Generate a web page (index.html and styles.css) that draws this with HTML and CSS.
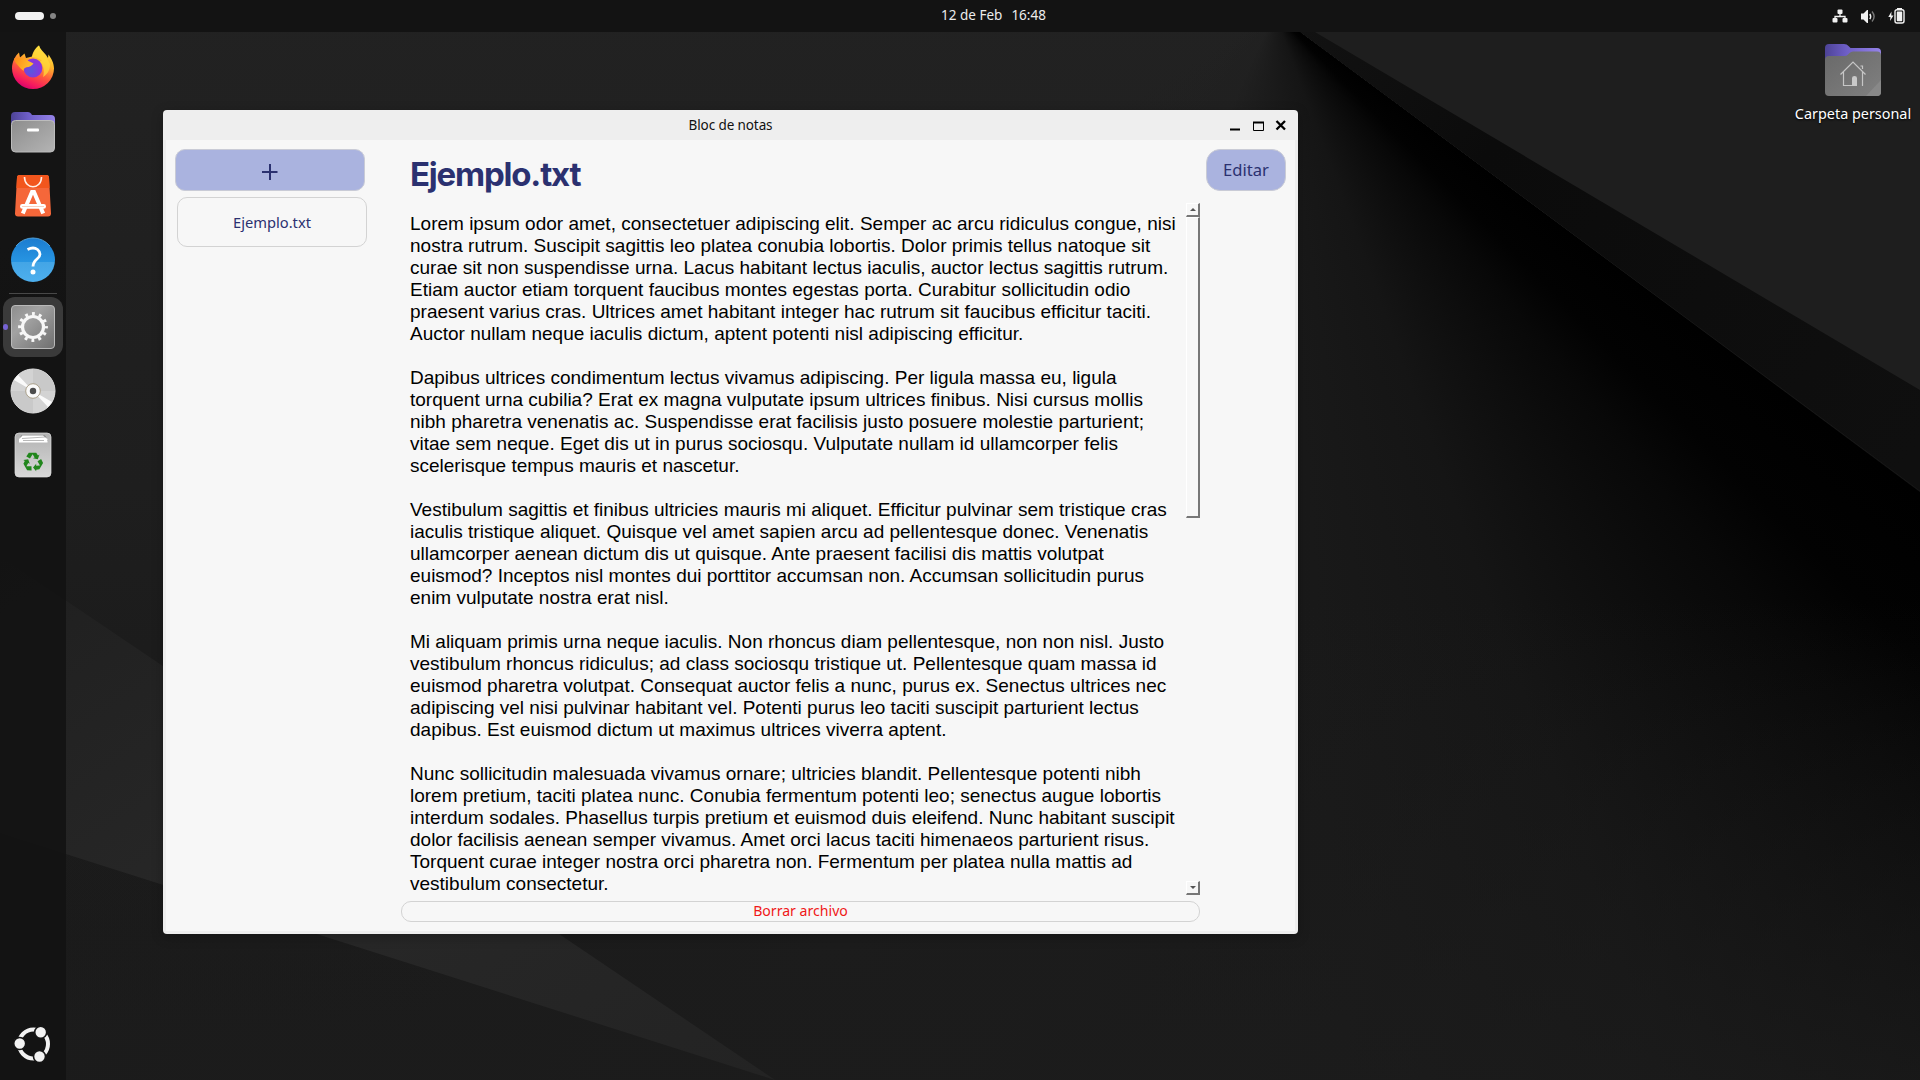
FILE: index.html
```html
<!DOCTYPE html>
<html lang="es">
<head>
<meta charset="utf-8">
<title>Bloc de notas</title>
<link rel="stylesheet" href="styles.css">
</head>
<body>
<svg class="wallpaper" viewBox="0 0 1920 1080" preserveAspectRatio="none">
  <defs>
    <linearGradient id="band" gradientUnits="userSpaceOnUse" x1="1300" y1="32" x2="1920" y2="440"><stop offset="0" stop-color="#121212"/><stop offset=".3" stop-color="#0b0b0b"/><stop offset="1" stop-color="#0f0f0f"/></linearGradient>
    <linearGradient id="wedge" x1="0" y1="0" x2="1" y2="1"><stop offset="0" stop-color="#1f1f1f"/><stop offset=".5" stop-color="#282828"/><stop offset="1" stop-color="#232323"/></linearGradient>
  </defs>
  <path d="M0 556 775 1080 0 833z" fill="url(#wedge)"/>
  <path d="M1300 32 1315 32 1920 390V491z" fill="url(#band)"/>
</svg>

<div class="desktop">
  <header class="topbar">
    <div class="workspaces"><i class="pill"></i><i class="dot"></i></div>
    <div class="clock"><span class="t">12 de Feb</span><span class="t">16:48</span></div>
    <div class="tray">
      <svg width="16" height="16" viewBox="0 0 16 16" fill="#f2f2f2"><rect x="5.5" y="1.5" width="5" height="4.5" rx="1"/><rect x=".5" y="10" width="5" height="4.5" rx="1"/><rect x="10.500" y="10" width="5" height="4.500" rx="1"/><path d="M8 5V8.500M3 11V8.500H13V11" fill="none" stroke="#f2f2f2" stroke-width="1.300"/></svg>
      <svg width="16" height="16" viewBox="0 0 16 16" fill="#f2f2f2"><path d="M1 5.500H3.500L7 2H8V15H7L3.500 11.500H1z"/><path d="M9.800 6Q11.500 8.500 9.800 11" fill="none" stroke="#f2f2f2" stroke-width="1.500"/><path d="M12 3.500Q16.200 8.500 12 13.500" fill="none" stroke="#777" stroke-width="1.400"/></svg>
      <svg width="17" height="16" viewBox="0 0 17 16" fill="#f2f2f2"><path d="M3.500 3.500 .3 9H2.500L2 13 5.500 7.500H3.300z"/><path d="M9 0h5v2H9z"/><rect x="7" y="1.700" width="9" height="13.300" rx="2" fill="none" stroke="#f2f2f2" stroke-width="1.400"/><rect x="8.800" y="3.500" width="5.400" height="9.700" rx=".6"/></svg>
    </div>
  </header>

  <div class="workspace">
    <nav class="dock">
      <div class="slot first">
        <svg width="46" height="46" viewBox="0 0 46 46">
          <defs>
            <linearGradient id="ff" x1=".75" y1="0" x2=".3" y2="1"><stop offset="0" stop-color="#fff04a"/><stop offset=".35" stop-color="#ffb52b"/><stop offset=".62" stop-color="#ff553f"/><stop offset=".85" stop-color="#f5195f"/><stop offset="1" stop-color="#d4006e"/></linearGradient>
            <radialGradient id="orb" cx=".4" cy=".65"><stop offset="0" stop-color="#5858dd"/><stop offset="1" stop-color="#8a35dc"/></radialGradient>
            <linearGradient id="fox" x1="0" y1="0" x2="1" y2=".3"><stop offset="0" stop-color="#ff8a16"/><stop offset="1" stop-color="#ffc02e"/></linearGradient>
          </defs>
          <path d="M22 12.500C23 7 26 3.500 29 1.500C30 5 33 7.500 36 11L38 14 38.500 10.500C41 14 44 19 44 24.500A21 20.500 0 0 1 2 24.500C2 18 5 12 9 8.500L10 13.500 14.500 9.500 16 14z" fill="url(#ff)"/>
          <circle cx="23" cy="24" r="9.400" fill="url(#orb)"/>
          <path d="M4 14.500C10 12.500 16 14 18.500 17L23.500 19.500C22 22 19 23 16.500 23.300C14 24.500 13.500 25 13.600 27C10 24 5 19 4 14.500z" fill="url(#fox)"/>
          <path d="M22 12.500C24 8 26 5 29 1.500C30 8 37 12 40 20C40 28 36 31 33 33C35 27 33 19 29.500 17.500L32 16.500C28 14 25 13 22 13z" fill="#ffd93b" opacity=".75"/>
        </svg>
      </div>
      <div class="slot">
        <svg width="46" height="46" viewBox="0 -1 46 46">
          <defs><linearGradient id="pur" x1="0" y1="0" x2="1" y2="0"><stop offset="0" stop-color="#4d4396"/><stop offset=".4" stop-color="#6f5fc8"/><stop offset="1" stop-color="#9583e8"/></linearGradient><linearGradient id="gry" x1="0" y1="0" x2="1" y2="1"><stop offset="0" stop-color="#8d8d8d"/><stop offset="1" stop-color="#b4b4b4"/></linearGradient></defs>
          <path d="M1 6a4 4 0 0 1 4-4H18q2 0 3 1.500l1 1.500H41a4 4 0 0 1 4 4V26H1z" fill="url(#pur)"/>
          <rect x="1.500" y="10.500" width="43" height="31.500" rx="4" fill="url(#gry)" stroke="#bcbcbc"/>
          <rect x="17" y="18.500" width="12" height="3" rx="1" fill="#fff"/>
        </svg>
      </div>
      <div class="slot">
        <svg width="46" height="46" viewBox="0 0 46 46">
          <path d="M9.500 2H36.500Q39 2 39 4.500L41 40.500Q41 43.500 38 43.500H8Q5 43.500 5 40.500L7 4.500Q7 2 9.500 2z" fill="#f5673a"/>
          <path d="M9.500 2H36.500Q39 2 39 4.500L39.500 15H6.400L7 4.500Q7 2 9.500 2z" fill="#f2561d"/>
          <path d="M14.500 4C14.500 17 31.500 17 31.500 4" fill="none" stroke="#fff0e8" stroke-width="1.600"/>
          <path d="M12.800 40.500 22 19H24L33.200 40.500" fill="none" stroke="#fff" stroke-width="4"/>
          <rect x="10" y="31" width="26" height="4.800" rx="2.400" fill="#fff"/><path d="M12 33.500H34" stroke="#f9c4ae" stroke-width=".8"/>
        </svg>
      </div>
      <div class="slot">
        <svg width="46" height="46" viewBox="0 0 46 46">
          <defs><linearGradient id="blu" x1="0" y1="0" x2="0" y2="1"><stop offset="0" stop-color="#1b7cd0"/><stop offset=".54" stop-color="#2795e2"/><stop offset=".55" stop-color="#43a5e6"/><stop offset="1" stop-color="#4dafee"/></linearGradient></defs>
          <circle cx="23" cy="23" r="22" fill="url(#blu)"/><path d="M6 9A22 22 0 0 1 40 9" fill="none" stroke="#5cb2ee" stroke-width=".8"/>
          <path d="M17.500 12.500Q23.500 9.500 27.500 12.500C31 15.500 30.500 19 27.500 21.500C24.500 24 23 25.500 23 29.500" fill="none" stroke="#fff" stroke-width="2.800"/><circle cx="23" cy="35" r="2.500" fill="#fff"/>
        </svg>
      </div>
      <hr class="rule">
      <div class="slot active">
        <svg width="46" height="46" viewBox="0 0 46 46">
          <defs><linearGradient id="set" x1="0" y1="0" x2="1" y2="1"><stop offset="0" stop-color="#8d8d8d"/><stop offset=".35" stop-color="#a2a2a2"/><stop offset="1" stop-color="#6f6f6f"/></linearGradient></defs>
          <rect x="1.500" y="1.500" width="43" height="43" rx="3.500" fill="url(#set)" stroke="#b9b9b9"/>
          <circle cx="23" cy="23" r="10.500" fill="none" stroke="#f7f7f7" stroke-width="3.200"/>
          <circle cx="23" cy="23" r="13.200" fill="none" stroke="#f7f7f7" stroke-width="3.400" stroke-dasharray="2.900 4.012" stroke-dashoffset="1.450"/>
        </svg>
      </div>
      <div class="slot">
        <svg width="46" height="46" viewBox="0 0 46 46">
          <circle cx="23" cy="23" r="22" fill="#d3d3d3" stroke="#e4e4e4"/>
          <path d="M23 23V1A22 22 0 0 1 45 23zM23 23V45A22 22 0 0 1 1 23z" fill="#c9c9c9"/>
          <path d="M23 23 4 12 8 7zM23 23 42 34 38 39z" fill="#fafafa"/>
          <circle cx="23" cy="23" r="7.300" fill="#fafafa" stroke="#aaa08a" stroke-width="1"/><circle cx="23" cy="23" r="3.200" fill="#4c4c4c"/>
        </svg>
      </div>
      <div class="slot">
        <svg width="46" height="46" viewBox="0 0 46 46">
          <defs><linearGradient id="bin" x1="0" y1="0" x2="0" y2="1"><stop offset="0" stop-color="#b2b2b2"/><stop offset="1" stop-color="#d8d8d8"/></linearGradient></defs>
          <rect x="5" y="1" width="36" height="44" rx="4" fill="url(#bin)" stroke="#e0e0e0" stroke-width=".7"/>
          <path d="M9 9 11 3.500H35L38 9" fill="#777"/><path d="M9 10.500V7L12.500 3.500H33L37.500 7V10.500z" fill="#fff"/><path d="M12 6.500 35 5M13 8.500H34" stroke="#999" stroke-width=".7" fill="none"/>
          <g fill="#21861c"><path id="arw" d="M18.800 20.800H26.200L28 23.400 29.500 22.600 27.800 27.200 23 26.300 24.600 25.400 22.600 22.200 20 26.500 16.300 24.500z"/><use href="#arw" transform="rotate(120 23 30)"/><use href="#arw" transform="rotate(240 23 30)"/></g>
        </svg>
      </div>
      <div class="slot launcher">
        <svg width="46" height="46" viewBox="0 0 46 46" fill="#f2f2f2">
          <circle cx="23.500" cy="23" r="14.500" fill="none" stroke="#f2f2f2" stroke-width="4"/>
          <g stroke="#151515" stroke-width="1.600"><circle cx="9.700" cy="22.500" r="6"/><circle cx="30.700" cy="11.200" r="6"/><circle cx="29.500" cy="35.500" r="6"/></g>
        </svg>
      </div>
    </nav>

    <main class="window">
      <header class="titlebar">
        <span class="t wtitle">Bloc de notas</span>
        <div class="controls">
          <svg width="60" height="14" viewBox="0 0 60 14" fill="none" stroke="#000"><path d="M2 11.500H12" stroke-width="2"/><path d="M25.500 4V12.500H35.500V4" stroke-width="1"/><path d="M25 4.500H36" stroke-width="2"/><path d="M48.500 3 57 11.500M57 3 48.500 11.500" stroke-width="2.300"/></svg>
        </div>
      </header>
      <div class="app">
        <aside class="files">
          <button class="btn add"><svg width="16" height="16" viewBox="0 0 16 16"><path d="M8 0V16M0 8H15.500" stroke="#2b3170" stroke-width="2"/></svg></button>
          <button class="btn file"><span class="t">Ejemplo.txt</span></button>
        </aside>
        <section class="note">
          <h1><span class="t">Ejemplo.txt</span></h1>
          <div class="pane">
            <pre class="body">Lorem ipsum odor amet, consectetuer adipiscing elit. Semper ac arcu ridiculus congue, nisi
nostra rutrum. Suscipit sagittis leo platea conubia lobortis. Dolor primis tellus natoque sit
curae sit non suspendisse urna. Lacus habitant lectus iaculis, auctor lectus sagittis rutrum.
Etiam auctor etiam torquent faucibus montes egestas porta. Curabitur sollicitudin odio
praesent varius cras. Ultrices amet habitant integer hac rutrum sit faucibus efficitur taciti.
Auctor nullam neque iaculis dictum, aptent potenti nisl adipiscing efficitur.

Dapibus ultrices condimentum lectus vivamus adipiscing. Per ligula massa eu, ligula
torquent urna cubilia? Erat ex magna vulputate ipsum ultrices finibus. Nisi cursus mollis
nibh pharetra venenatis ac. Suspendisse erat facilisis justo posuere molestie parturient;
vitae sem neque. Eget dis ut in purus sociosqu. Vulputate nullam id ullamcorper felis
scelerisque tempus mauris et nascetur.

Vestibulum sagittis et finibus ultricies mauris mi aliquet. Efficitur pulvinar sem tristique cras
iaculis tristique aliquet. Quisque vel amet sapien arcu ad pellentesque donec. Venenatis
ullamcorper aenean dictum dis ut quisque. Ante praesent facilisi dis mattis volutpat
euismod? Inceptos nisl montes dui porttitor accumsan non. Accumsan sollicitudin purus
enim vulputate nostra erat nisl.

Mi aliquam primis urna neque iaculis. Non rhoncus diam pellentesque, non non nisl. Justo
vestibulum rhoncus ridiculus; ad class sociosqu tristique ut. Pellentesque quam massa id
euismod pharetra volutpat. Consequat auctor felis a nunc, purus ex. Senectus ultrices nec
adipiscing vel nisi pulvinar habitant vel. Potenti purus leo taciti suscipit parturient lectus
dapibus. Est euismod dictum ut maximus ultrices viverra aptent.

Nunc sollicitudin malesuada vivamus ornare; ultricies blandit. Pellentesque potenti nibh
lorem pretium, taciti platea nunc. Conubia fermentum potenti leo; senectus augue lobortis
interdum sodales. Phasellus turpis pretium et euismod duis eleifend. Nunc habitant suscipit
dolor facilisis aenean semper vivamus. Amet orci lacus taciti himenaeos parturient risus.
Torquent curae integer nostra orci pharetra non. Fermentum per platea nulla mattis ad
vestibulum consectetur.</pre>
            <div class="scrollbar"><i class="arrow up"></i><i class="thumb"></i><i class="arrow down"></i></div>
          </div>
          <button class="btn delete"><span class="t">Borrar archivo</span></button>
        </section>
        <aside class="actions"><button class="btn edit"><span class="t">Editar</span></button></aside>
      </div>
    </main>

    <div class="icons">
      <figure class="home">
        <svg width="58" height="54" viewBox="0 0 58 54">
          <defs><linearGradient id="hm" x1="0" y1="0" x2="1" y2="1"><stop offset="0" stop-color="#696969"/><stop offset="1" stop-color="#808080"/></linearGradient></defs>
          <path d="M1 5a4 4 0 0 1 4-4H20q3 0 4.500 2l2 2H53a4 4 0 0 1 4 4V26H1z" fill="url(#pur)"/>
          <path d="M1 17a4 4 0 0 1 4-4H21q2 0 3.500-2l1-1Q27 8.500 29 8.500H53a4 4 0 0 1 4 4V49a4 4 0 0 1-4 4H5a4 4 0 0 1-4-4z" fill="url(#hm)"/>
          <path d="M57 37V49a4 4 0 0 1-4 4H42z" fill="#888"/>
          <path d="M16.500 31.500 29 19 41.500 31.500M19.500 29V42.500H28M38.500 29V43M36.500 23H38.500V26" fill="none" stroke="#c6c6c6" stroke-width="1.200"/><path d="M28 43V35q0-2 2.500-2t2.500 2V43z" fill="#c9c9c9"/>
        </svg>
        <figcaption><span class="t">Carpeta personal</span></figcaption>
      </figure>
    </div>
  </div>
</div>
</body>
</html>
```
FILE: styles.css
```css
* { box-sizing: border-box; }
body {
  margin: 0; width: 1920px; height: 1080px; overflow: hidden; font-family: "Noto Sans", sans-serif;
  background:
    linear-gradient(transparent 600px, rgba(28, 28, 28, .75) 1080px),
    conic-gradient(from 90deg at 1275px 13.5px, #1e1e1e 0 36.5deg, #000 36.6deg, #020202 45deg, #080808 51deg, #0d0d0d 58deg, #151515 70deg, #191919 86deg, rgba(31, 31, 31, .5) 115deg, transparent 150deg 359deg, #1e1e1e 360deg),
    linear-gradient(#222, #1e1e1e 45%, #1a1a1a 75%, #181818);
}
.wallpaper { position: absolute; inset: 0; width: 1920px; height: 1080px; }
.desktop { position: relative; display: flex; flex-direction: column; height: 1080px; }
.t { display: inline-block; white-space: nowrap; }

.topbar { display: grid; grid-template-columns: 1fr auto 1fr; align-items: center; height: 32px; background: #131313; color: #ececec; font-size: 14px; }
.workspaces { display: flex; align-items: center; gap: 6px; padding-left: 15px; }
.pill { width: 29px; height: 8px; border-radius: 4px; background: #f2f2f2; }
.dot { width: 6px; height: 6px; border-radius: 50%; background: #858585; }
.clock { display: flex; gap: 9px; padding-left: 67px; padding-bottom: 2px; font-size: 13.500px; line-height: 28px; }
.tray { display: flex; justify-content: flex-end; gap: 12px; padding-right: 15px; }

.workspace { display: flex; flex: 1; }
.dock { display: flex; flex-direction: column; align-items: center; width: 66px; padding: 5px 0 6px; background: rgba(18, 18, 18, .88); }
.slot { display: flex; align-items: center; justify-content: center; width: 60px; height: 60px; margin-bottom: 4px; border-radius: 12px; flex: none; }
.first { margin-bottom: 5px; }
.rule { width: 48px; height: 1px; margin: -1px 0 3px; border: 0; background: #484848; }
.active { position: relative; background: #3a3a3a; }
.active::before { content: ""; position: absolute; left: 0; top: 27px; width: 5px; height: 6px; border-radius: 50%; background: #7663d4; }
.launcher { margin: auto 0 0; }

.window { display: flex; flex-direction: column; width: 1135px; height: 824px; margin: 78px 0 0 97px; padding: 0 3px 3px; border-radius: 4px; background: #eee; box-shadow: 0 3px 12px rgba(0, 0, 0, .25); }
.titlebar { display: grid; grid-template-columns: 1fr auto 1fr; align-items: center; height: 30px; color: #111; }
.wtitle { grid-column: 2; padding-bottom: 1px; font-size: 13.500px; letter-spacing: -.1px; }
.controls { display: flex; justify-content: flex-end; padding-right: 7px; padding-bottom: 1px; }
.app { display: grid; grid-template-columns: 235px 799px 95px; flex: 1; background: #f7f7f7; }

.btn { display: flex; align-items: center; justify-content: center; padding: 0; border: 1px solid #d3d3d3; background: #f7f7f7; color: #2b3170; font-family: inherit; font-size: 15px; }
.files { display: flex; flex-direction: column; gap: 6px; padding: 9px 0 0 9px; }
.add, .edit { height: 42px; border-color: #c9cbd6; background: #aab3df; }
.add { width: 190px; border-radius: 10px; padding-top: 4px; }
.file { width: 190px; height: 50px; margin-left: 2px; border-radius: 10px; font-size: 14.700px; }
.actions { padding: 9px 0 0 6px; }
.edit { width: 80px; padding-bottom: 2px; border-radius: 14px; font-size: 16.600px; }
.note { display: flex; flex-direction: column; }
h1 { display: flex; align-items: center; height: 62px; margin: 0 0 0 9px; padding-top: 6px; color: #2b3170; font: 700 33px/40px Inter, sans-serif; letter-spacing: -1.200px; }
.pane { display: flex; justify-content: space-between; height: 693px; padding-left: 9px; }
.body { margin: 0; padding-top: 11px; font: 19px/22px "Liberation Sans", Arial, sans-serif; color: #000; }
.scrollbar { display: flex; flex-direction: column; width: 14px; margin-top: 1px; }
.arrow, .thumb { display: block; width: 14px; border: 1px solid #fff; border-right: 2px solid #777; border-bottom: 2px solid #777; background: #f7f7f7; }
.arrow { display: flex; align-items: center; justify-content: center; height: 14px; }
.arrow::before { content: ""; border: 3px solid transparent; }
.up::before { border-top: 0; border-bottom-color: #555; }
.down::before { border-bottom: 0; border-top-color: #555; }
.thumb { height: 301px; }
.down { margin-top: auto; }
.delete { width: 799px; height: 21px; margin-top: 6px; padding-bottom: 2px; border-radius: 10px; color: #f01818; font-size: 14.100px; }

.icons { margin-left: auto; }
.home { display: flex; flex-direction: column; align-items: center; width: 126px; margin: 11px 4px 0 0; gap: 7px; color: #fff; font-size: 14.400px; line-height: 20px; text-shadow: 0 1px 2px #000; }
```
